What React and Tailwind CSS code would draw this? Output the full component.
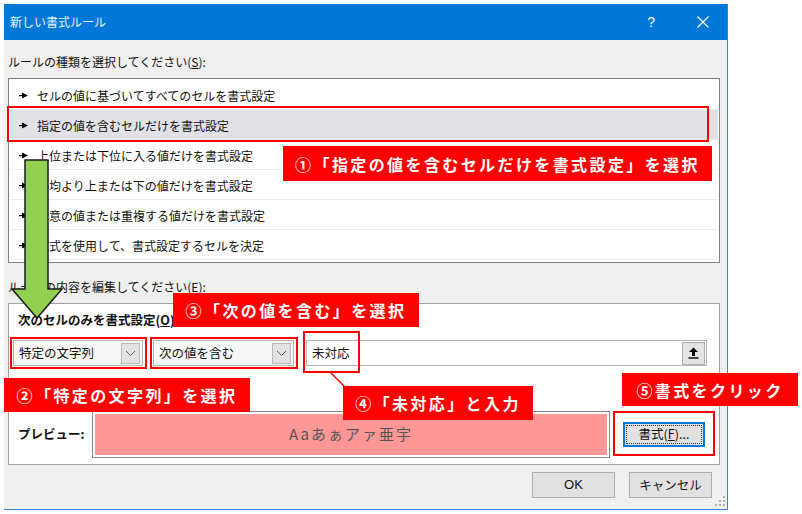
import React from "react";

const jp = { fontFamily: '"Noto Sans CJK JP", "Noto Sans", sans-serif' };

function Bullet() {
  return (
    <svg width="9" height="7" viewBox="0 0 9 7" className="shrink-0">
      <rect x="0" y="3" width="4" height="1.2" fill="#000" />
      <polygon points="3,0.5 9,3.5 3,6.5" fill="#000" />
    </svg>
  );
}

function Chevron() {
  return (
    <svg width="11" height="7" viewBox="0 0 11 7">
      <polyline points="1,1 5.5,5.5 10,1" fill="none" stroke="#606060" strokeWidth="1" />
    </svg>
  );
}

function Combo({ w, text }) {
  return (
    <div className={`h-[26px] ${w} flex items-center border border-[#b4b4b4] bg-[#f7f7f7] pl-[5px] pr-[2px]`}>
      <span className="flex-1 text-[12.5px] text-[#111]">{text}</span>
      <div className="w-[19px] h-[21px] flex items-center justify-center bg-[#e3e3e3] border border-[#b9b9b9]">
        <Chevron />
      </div>
    </div>
  );
}

const rules = [
  "セルの値に基づいてすべてのセルを書式設定",
  "指定の値を含むセルだけを書式設定",
  "上位または下位に入る値だけを書式設定",
  "平均より上または下の値だけを書式設定",
  "一意の値または重複する値だけを書式設定",
  "数式を使用して、書式設定するセルを決定",
];

function Callout({ cls, children }) {
  return (
    <div
      className={`absolute bg-[#ff0000] text-white font-bold text-[16px] tracking-[2.4px] flex items-center justify-center ${cls}`}
      style={jp}
    >
      {children}
    </div>
  );
}

export default function App() {
  return (
    <div className="relative w-[802px] h-[514px] bg-white overflow-hidden" style={jp}>
      {/* dialog */}
      <div className="ml-[4px] mt-[4px] w-[724px] h-[506px] flex flex-col bg-[#f0f0f0] border-r border-b border-[#3a84d4]">
        <div className="h-[36px] shrink-0 bg-[#0078d7] flex items-center pl-[6px] pr-[18px] text-white">
          <span className="text-[12px] text-[#eef5fc] flex-1">新しい書式ルール</span>
          <span className="text-[14px] mr-[42px]" style={{ fontFamily: '"Liberation Sans", sans-serif' }}>?</span>
          <svg width="12" height="12" viewBox="0 0 12 12">
            <path d="M0.5 0.5 L11.5 11.5 M11.5 0.5 L0.5 11.5" stroke="#fff" strokeWidth="1.2" />
          </svg>
        </div>
        <div className="flex flex-col pl-[4px] pr-[7px] text-[12px] text-[#111]">
          <div className="mt-[14px] h-[16px] leading-[16px]">
            ルールの種類を選択してください(<span className="underline">S</span>):
          </div>
          <div className="mt-[8px] h-[185px] border border-[#808080] bg-white p-[1px] flex flex-col">
            {rules.map((r, i) => (
              <div
                key={i}
                className={`h-[30px] shrink-0 flex items-center gap-[9px] pl-[9px] pt-[2px] border-b border-[#ececec] ${
                  i === 1 ? "bg-[#e1e1e6]" : ""
                }`}
              >
                <Bullet />
                <span>{r}</span>
              </div>
            ))}
          </div>
          <div className="mt-[16px] h-[16px] leading-[16px]">
            ルールの内容を編集してください(<span className="underline">E</span>):
          </div>
          <div className="mt-[8px] h-[162px] border border-[#a0a0a0] bg-white flex flex-col px-[4px]">
            <div className="mt-[8px] ml-[5px] h-[16px] leading-[16px] font-bold text-[12.5px]">
              次のセルのみを書式設定(<span className="underline">O</span>):
            </div>
            <div className="mt-[12px] flex items-center">
              <Combo w="w-[130px]" text="特定の文字列" />
              <div className="w-[10px]" />
              <Combo w="w-[141px]" text="次の値を含む" />
              <div className="w-[12px]" />
              <div className="h-[26px] w-[401px] flex items-center border border-[#b4b4b4] bg-white pl-[5px] pr-[1px]">
                <span className="flex-1 text-[12.5px]">未対応</span>
                <div className="w-[23px] h-[23px] flex items-center justify-center bg-[#e3e3e3] border border-[#adadad]">
                  <svg width="11" height="12" viewBox="0 0 11 12">
                    <path d="M5.5 0.5 L10 5 L7 5 L7 9 L4 9 L4 5 L1 5 Z" fill="#000" />
                    <rect x="0.5" y="10.3" width="10" height="1.4" fill="#000" />
                  </svg>
                </div>
              </div>
            </div>
            <div className="mt-[45px] h-[47px] flex items-center">
              <span className="ml-[5px] w-[74px] font-bold text-[12.5px]">プレビュー:</span>
              <div className="w-[518px] h-[47px] border border-[#888] p-[2px]">
                <div className="w-full h-full bg-[#ff9797] flex items-center justify-center text-[15px] tracking-[2px] text-[#555]">
                  Aaあぁアァ亜宇
                </div>
              </div>
              <div className="ml-[13px] w-[82px] h-[25px] border-2 border-[#0078d7] bg-[#e1e1e1] p-[1px]">
                <div className="w-full h-full border border-dotted border-[#333] flex items-center justify-center text-[12.5px]">
                  書式(<span className="underline">F</span>)...
                </div>
              </div>
            </div>
          </div>
          <div className="mt-[7px] flex justify-end gap-[14px] pr-[8px]">
            <div className="w-[83px] h-[26px] bg-[#e1e1e1] border border-[#adadad] flex items-center justify-center" style={{ fontFamily: '"Liberation Sans", sans-serif' }}>
              <span className="text-[13px]">OK</span>
            </div>
            <div className="w-[83px] h-[26px] bg-[#e1e1e1] border border-[#adadad] flex items-center justify-center text-[12.5px]">
              キャンセル
            </div>
          </div>
        </div>
      </div>

      {/* resize grip */}
      <svg className="absolute left-[715px] top-[496px]" width="11" height="11" viewBox="0 0 11 11">
        {[
          [8, 0], [8, 4], [4, 4], [8, 8], [4, 8], [0, 8],
        ].map(([x, y], i) => (
          <rect key={i} x={x} y={y} width="2" height="2" fill="#b0b0b0" />
        ))}
      </svg>

      {/* red outlines */}
      <div className="absolute left-[7px] top-[106px] w-[702px] h-[36px] border-2 border-[#ff0000]" />
      <div className="absolute left-[10px] top-[337px] w-[137px] h-[32px] border-2 border-[#ff0000]" />
      <div className="absolute left-[150px] top-[337px] w-[148px] h-[32px] border-2 border-[#ff0000]" />
      <div className="absolute left-[303px] top-[331px] w-[57px] h-[42px] border-2 border-[#ff0000]" />
      <div className="absolute left-[613px] top-[411px] w-[102px] h-[45px] border-2 border-[#ff0000]" />

      {/* connector line */}
      <svg className="absolute left-[320px] top-[370px]" width="40" height="30" viewBox="0 0 40 30">
        <line x1="10" y1="2" x2="26" y2="18" stroke="#ff0000" strokeWidth="1.5" />
      </svg>

      {/* green arrow */}
      <svg className="absolute left-0 top-0" width="80" height="330" viewBox="0 0 80 330">
        <polygon
          points="25,160 48,160 48,289 62,289 37,318 12,289 25,289"
          fill="#92d050"
          stroke="#1a1a1a"
          strokeWidth="1.5"
          strokeLinejoin="miter"
        />
      </svg>

      {/* callouts */}
      <Callout cls="left-[283px] top-[146px] w-[429px] h-[35px]">①「指定の値を含むセルだけを書式設定」を選択</Callout>
      <Callout cls="left-[173px] top-[293px] w-[246px] h-[34px]">③「次の値を含む」を選択</Callout>
      <Callout cls="left-[4px] top-[378px] w-[246px] h-[34px]">②「特定の文字列」を選択</Callout>
      <Callout cls="left-[343px] top-[386px] w-[190px] h-[34px]">④「未対応」と入力</Callout>
      <Callout cls="left-[622px] top-[373px] w-[176px] h-[33px]">⑤書式をクリック</Callout>
    </div>
  );
}
